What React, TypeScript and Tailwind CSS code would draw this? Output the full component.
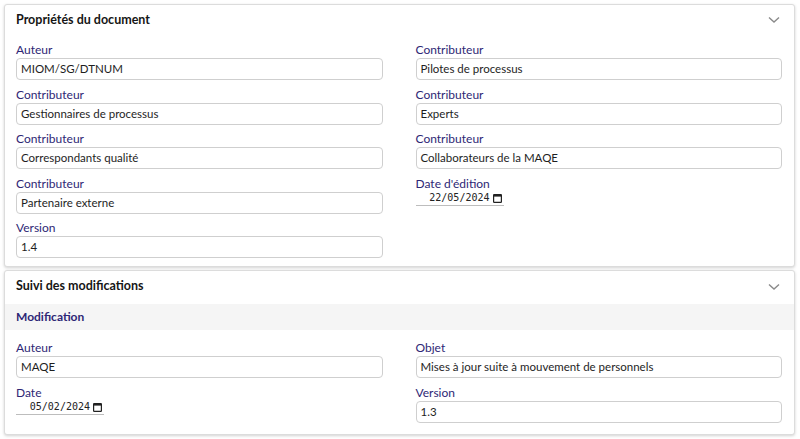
import React from "react";

const Chevron = () => (
  <svg width="12" height="8" viewBox="0 0 12 8" className="text-[#8a8a8a]">
    <path d="M1 1.5 L6 6 L11 1.5" fill="none" stroke="currentColor" strokeWidth="1.4" />
  </svg>
);

const Field = ({ label, value }: { label: string; value: string }) => (
  <div className="flex flex-col">
    <div className="h-4 text-[12px] leading-4 text-[#2e2775]">{label}</div>
    <div className="h-[22px] rounded-[4px] border border-[#cfcfcf] px-[4px] flex items-center text-[11.5px] text-[#1e1e1e]">
      {value}
    </div>
  </div>
);

const DateField = ({ label, value }: { label: string; value: string }) => (
  <div className="flex flex-col">
    <div className="h-4 text-[12px] leading-4 text-[#2e2775]">{label}</div>
    <div className="w-[88px] h-[14px] border-b border-[#bdbdbd] flex items-center justify-end pr-[2px] gap-[3px]">
      <span className="text-[10px] leading-[12px] text-[#222]" style={{ fontFamily: '"DejaVu Sans Mono", monospace' }}>
        {value}
      </span>
      <svg width="9" height="10" viewBox="0 0 9 10">
        <rect x="0.6" y="1.6" width="7.8" height="7.8" rx="0.6" fill="none" stroke="#222" strokeWidth="1.2" />
        <rect x="0.6" y="1.6" width="7.8" height="2" fill="#222" />
      </svg>
    </div>
  </div>
);

export default function App() {
  return (
    <div className="bg-white w-[800px] h-[439px] pt-1 px-1 flex flex-col gap-[3px]" style={{ fontFamily: 'Lato, "Noto Sans", sans-serif' }}>
      <div className="w-[791px] rounded-[3px] border border-[#dcdcdc] shadow-[0_1px_3px_rgba(0,0,0,0.18)] bg-white">
        <div className="h-[30px] pl-[11px] pr-3 flex items-center justify-between">
          <span className="text-[12.5px] font-bold text-[#161616]">Propriétés du document</span>
          <span className="mr-[2px]"><Chevron /></span>
        </div>
        <div className="mt-[7px] pl-[11px] pr-3 pb-[8px] grid grid-cols-2 gap-x-[33px] gap-y-[6.5px]">
          <Field label="Auteur" value="MIOM/SG/DTNUM" />
          <Field label="Contributeur" value="Pilotes de processus" />
          <Field label="Contributeur" value="Gestionnaires de processus" />
          <Field label="Contributeur" value="Experts" />
          <Field label="Contributeur" value="Correspondants qualité" />
          <Field label="Contributeur" value="Collaborateurs de la MAQE" />
          <Field label="Contributeur" value="Partenaire externe" />
          <DateField label="Date d'édition" value="22/05/2024" />
          <Field label="Version" value="1.4" />
        </div>
      </div>
      <div className="w-[791px] rounded-[3px] border border-[#dcdcdc] shadow-[0_1px_3px_rgba(0,0,0,0.18)] bg-white">
        <div className="h-[33px] pl-[11px] pr-3 pb-[2px] flex items-center justify-between">
          <span className="text-[12.5px] font-bold text-[#161616]">Suivi des modifications</span>
          <span className="mr-[2px]"><Chevron /></span>
        </div>
        <div className="h-[26px] bg-[#f5f5f5] pl-[11px] pr-3 flex items-center">
          <span className="text-[12px] font-bold text-[#2e2775]">Modification</span>
        </div>
        <div className="mt-[10px] pl-[11px] pr-3 pb-[11px] grid grid-cols-2 gap-x-[33px] gap-y-[6.5px]">
          <Field label="Auteur" value="MAQE" />
          <Field label="Objet" value="Mises à jour suite à mouvement de personnels" />
          <DateField label="Date" value="05/02/2024" />
          <Field label="Version" value="1.3" />
        </div>
      </div>
    </div>
  );
}
